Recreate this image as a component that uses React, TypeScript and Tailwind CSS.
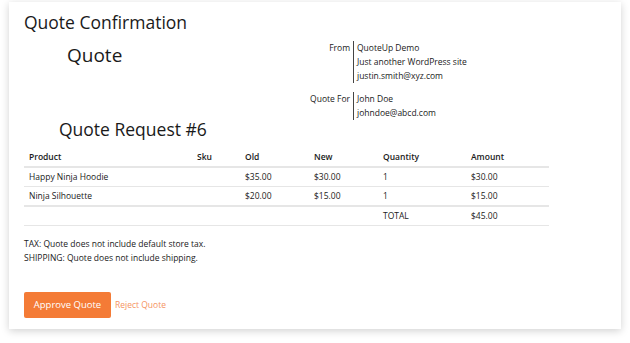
const rows = [
  { product: 'Happy Ninja Hoodie', sku: '', old: '$35.00', price: '$30.00', qty: '1', amount: '$30.00' },
  { product: 'Ninja Silhouette', sku: '', old: '$20.00', price: '$15.00', qty: '1', amount: '$15.00' },
];

const cols = 'grid grid-cols-[168px_48px_69px_69px_88px_83px]';

export default function App() {
  return (
    <div className="h-[343px] w-[630px] bg-white font-['Open_Sans',sans-serif] text-[#1a1a1a]">
      <div className="ml-[9px] mt-[2px] h-[327px] w-[612px] bg-white px-[15px] pt-[8px] shadow-[0_2px_8px_rgba(0,0,0,0.18)]">
        <h1 className="text-[17.5px] leading-[25px]">Quote Confirmation</h1>

        <div className="mt-[5px] flex">
          <div className="w-[278px]">
            <div className="ml-[43px] mt-[3px] text-[19px] leading-[24px]">Quote</div>
            <div className="ml-[35px] mt-[50px] text-[17.5px] leading-[24px]">Quote Request #6</div>
          </div>

          <div className="mt-[1px] text-[8.5px] leading-[14px]">
            <div className="flex">
              <div className="w-[51px] pr-[3px] text-right">From</div>
              <div className="border-l border-[#444] pl-[3px]">
                <div>QuoteUp Demo</div>
                <div>Just another WordPress site</div>
                <div>justin.smith@xyz.com</div>
              </div>
            </div>
            <div className="mt-[9px] flex">
              <div className="w-[51px] pr-[3px] text-right">Quote For</div>
              <div className="border-l border-[#444] pl-[3px]">
                <div>John Doe</div>
                <div>johndoe@abcd.com</div>
              </div>
            </div>
          </div>
        </div>

        <div className="mt-[7px] w-[525px] text-[8.5px] leading-[18px]">
          <div className={`${cols} border-b-2 border-[#e6e6e6] font-semibold`}>
            <div className="pl-[5px]">Product</div>
            <div className="pl-[5px]">Sku</div>
            <div className="pl-[5px]">Old</div>
            <div className="pl-[5px]">New</div>
            <div className="pl-[5px]">Quantity</div>
            <div className="pl-[5px]">Amount</div>
          </div>
          {rows.map((r, i) => (
            <div
              key={r.product}
              className={`${cols} ${i === rows.length - 1 ? 'border-b-2' : 'border-b'} border-[#e6e6e6]`}
            >
              <div className="pl-[5px]">{r.product}</div>
              <div className="pl-[5px]">{r.sku}</div>
              <div className="pl-[5px]">{r.old}</div>
              <div className="pl-[5px]">{r.price}</div>
              <div className="pl-[5px]">{r.qty}</div>
              <div className="pl-[5px]">{r.amount}</div>
            </div>
          ))}
          <div className={`${cols} border-b border-[#e6e6e6]`}>
            <div />
            <div />
            <div />
            <div />
            <div className="pl-[5px]">TOTAL</div>
            <div className="pl-[5px]">$45.00</div>
          </div>
        </div>

        <div className="mt-[11px] text-[8.5px] leading-[14px]">
          <div>TAX: Quote does not include default store tax.</div>
          <div>SHIPPING: Quote does not include shipping.</div>
        </div>

        <div className="mt-[27px] flex items-center gap-[4px]">
          <button className="h-[26px] w-[87px] rounded-[2px] bg-[#f47b36] text-[9.5px] text-white">
            Approve Quote
          </button>
          <a className="text-[8.5px] text-[#f59462]">Reject Quote</a>
        </div>
      </div>
    </div>
  );
}
